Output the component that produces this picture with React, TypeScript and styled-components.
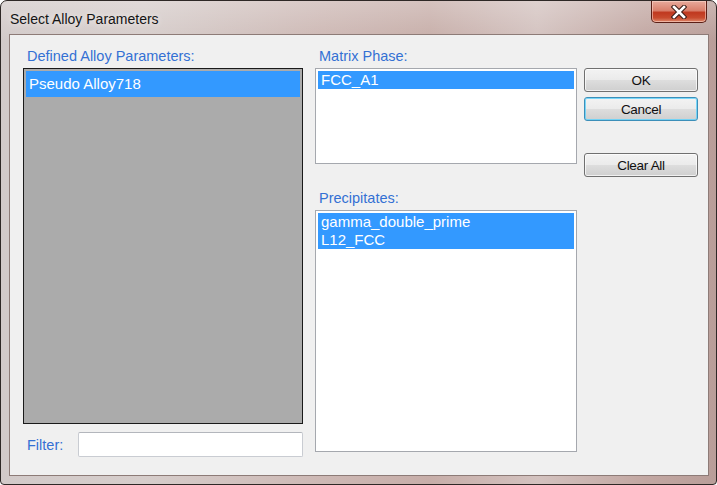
import React from 'react';
import styled, { createGlobalStyle } from 'styled-components';

const definedItems = ['Pseudo Alloy718'];
const matrixItems = ['FCC_A1'];
const precipitateItems = ['gamma_double_prime', 'L12_FCC'];

const GlobalStyle = createGlobalStyle`
  html, body {
    margin: 0;
    padding: 0;
    background: #ffffff;
  }
  body {
    font-family: "Liberation Sans", Arial, sans-serif;
  }
`;

const SelectAlloyParameters = () => {
  return (
    <>
      <GlobalStyle />
      <Window>
        <TitleBar>
          <Title>Select Alloy Parameters</Title>
          <CloseButton aria-label="Close">
            <svg width="16" height="14" viewBox="0 0 16 14">
              <path
                d="M3 2 L13 12 M13 2 L3 12"
                stroke="#3a1d18"
                strokeWidth="4.6"
                strokeLinecap="square"
              />
              <path
                d="M3 2 L13 12 M13 2 L3 12"
                stroke="#ffffff"
                strokeWidth="2.6"
                strokeLinecap="square"
              />
            </svg>
          </CloseButton>
        </TitleBar>
        <Client>
          <LeftColumn>
            <GroupLabel>Defined Alloy Parameters:</GroupLabel>
            <ListBox $height={356} $dark>
              {definedItems.map((item) => (
                <ListItem key={item} $selected $rowHeight={26}>
                  {item}
                </ListItem>
              ))}
            </ListBox>
            <FilterRow>
              <FilterLabel htmlFor="filter">Filter:</FilterLabel>
              <FilterInput id="filter" />
            </FilterRow>
          </LeftColumn>

          <MiddleColumn>
            <GroupLabel>Matrix Phase:</GroupLabel>
            <ListBox $height={96}>
              {matrixItems.map((item) => (
                <ListItem key={item} $selected $rowHeight={18}>
                  {item}
                </ListItem>
              ))}
            </ListBox>
            <GroupLabel $top={25}>Precipitates:</GroupLabel>
            <ListBox $height={242}>
              {precipitateItems.map((item) => (
                <ListItem key={item} $selected $rowHeight={18}>
                  {item}
                </ListItem>
              ))}
            </ListBox>
          </MiddleColumn>

          <ButtonColumn>
            <DialogButton>OK</DialogButton>
            <DialogButton $focused>Cancel</DialogButton>
            <DialogButton $gap={27}>Clear All</DialogButton>
          </ButtonColumn>
        </Client>
      </Window>
    </>
  );
};

const Window = styled.div`
  width: 717px;
  height: 485px;
  box-sizing: border-box;
  border: 1px solid #2e2826;
  border-radius: 7px 7px 4px 4px;
  background:
    linear-gradient(180deg, rgba(255, 255, 255, 0.25) 0%, rgba(255, 255, 255, 0) 40px),
    linear-gradient(
      90deg,
      #d2cac9 0%,
      #d6cdcb 20%,
      #cdb8b4 45%,
      #c7aea9 60%,
      #d3c2bf 75%,
      #c2a7a2 90%,
      #b99e99 100%
    );
  display: flex;
  flex-direction: column;
  overflow: hidden;
`;

const TitleBar = styled.div`
  height: 33px;
  display: flex;
  align-items: flex-start;
  justify-content: space-between;
  padding: 0 8px 0 9px;
`;

const Title = styled.span`
  font-family: "Liberation Sans", Arial, sans-serif;
  font-size: 14px;
  color: #141414;
  margin-top: 10px;
  text-shadow: 0 0 6px rgba(255, 255, 255, 0.8);
`;

const CloseButton = styled.div`
  width: 56px;
  height: 22px;
  box-sizing: border-box;
  border: 1px solid #5b1f16;
  border-top: none;
  border-radius: 0 0 5px 5px;
  background: linear-gradient(
    180deg,
    #e8aa9c 0%,
    #d9806c 45%,
    #c0391f 55%,
    #c84b2e 80%,
    #df8a6d 100%
  );
  box-shadow: inset 0 0 0 1px rgba(255, 220, 210, 0.55);
  display: flex;
  align-items: center;
  justify-content: center;
  margin-right: 1px;
`;

const Client = styled.div`
  flex: 1;
  margin: 0 7px 8px 8px;
  box-sizing: border-box;
  border: 1px solid #8d7b77;
  background: #f0f0f0;
  display: flex;
  padding: 12px 0 0 13px;
`;

const LeftColumn = styled.div`
  width: 280px;
  display: flex;
  flex-direction: column;
`;

const MiddleColumn = styled.div`
  width: 262px;
  margin-left: 12px;
  display: flex;
  flex-direction: column;
`;

const ButtonColumn = styled.div`
  width: 114px;
  margin-left: 7px;
  padding-top: 21px;
  display: flex;
  flex-direction: column;
`;

const GroupLabel = styled.div<{ $top?: number }>`
  font-size: 14.5px;
  line-height: 18px;
  height: 18px;
  color: #3470d4;
  padding-left: 4px;
  margin-top: ${(p) => p.$top ?? 0}px;
  margin-bottom: 3px;
  white-space: nowrap;
`;

const ListBox = styled.div<{ $height: number; $dark?: boolean }>`
  height: ${(p) => p.$height}px;
  box-sizing: border-box;
  border: 1px solid ${(p) => (p.$dark ? '#1a1a1a' : '#a5a8ae')};
  background: ${(p) => (p.$dark ? '#ababab' : '#ffffff')};
  padding: 2px 2px 0 2px;
  overflow: hidden;
`;

const ListItem = styled.div<{ $selected?: boolean; $rowHeight: number }>`
  height: ${(p) => p.$rowHeight}px;
  line-height: ${(p) => p.$rowHeight}px;
  padding-left: 3px;
  font-size: 15px;
  color: ${(p) => (p.$selected ? '#ffffff' : '#000000')};
  background: ${(p) => (p.$selected ? '#3399ff' : 'transparent')};
  white-space: nowrap;
`;

const FilterRow = styled.div`
  display: flex;
  align-items: center;
  margin-top: 8px;
`;

const FilterLabel = styled.label`
  width: 55px;
  padding-left: 4px;
  box-sizing: border-box;
  font-size: 14.5px;
  color: #3470d4;
`;

const FilterInput = styled.input`
  width: 225px;
  height: 25px;
  box-sizing: border-box;
  border: 1px solid #c9ccd2;
  border-top-color: #b3b6bc;
  border-radius: 2px;
  background: #ffffff;
  outline: none;
  font-family: "Liberation Sans", Arial, sans-serif;
  font-size: 13px;
`;

const DialogButton = styled.button<{ $focused?: boolean; $gap?: number }>`
  height: 24px;
  margin-bottom: 5px;
  margin-top: ${(p) => p.$gap ?? 0}px;
  box-sizing: border-box;
  border: 1px solid ${(p) => (p.$focused ? '#3c8fb9' : '#707070')};
  border-radius: 3px;
  background: linear-gradient(180deg, #f3f3f3 0%, #ebebeb 48%, #dddddd 52%, #cfcfcf 100%);
  box-shadow: inset 0 0 0 1px
    ${(p) => (p.$focused ? 'rgba(100, 210, 250, 0.85)' : 'rgba(255, 255, 255, 0.7)')};
  font-family: "Liberation Sans", Arial, sans-serif;
  font-size: 13.5px;
  letter-spacing: -0.3px;
  color: #101010;
  padding: 0;
`;

export default SelectAlloyParameters;
